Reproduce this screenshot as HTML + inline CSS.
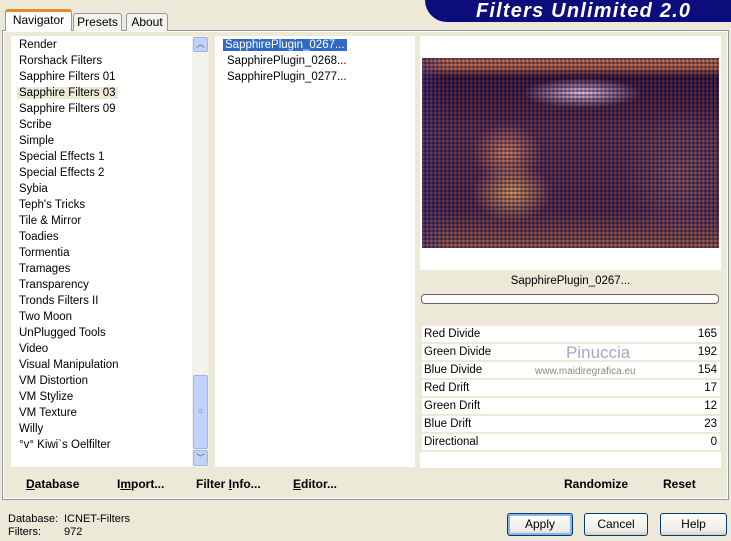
<!DOCTYPE html>
<html><head><style>
*{margin:0;padding:0;box-sizing:border-box}
body{width:731px;height:541px;background:#ece9d8;font-family:"Liberation Sans",sans-serif;font-size:11px;color:#000;position:relative;overflow:hidden}
.a{position:absolute}
.tab{position:absolute;border:1px solid #919b9c;border-bottom:none;background:#f4f3ee;font-size:12px;text-align:center;border-radius:3px 3px 0 0}
.list div{height:16px;line-height:16px;padding-left:8px;font-size:11.5px;white-space:nowrap}
.row{position:absolute;left:422px;width:298px;height:16px;background:#fff;font-size:11.5px;line-height:16px}
.row span{position:absolute;right:3px}
.row b{font-weight:normal;position:absolute;left:2px}
.btn{position:absolute;top:513px;height:23px;border:1px solid #003c74;border-radius:3px;background:linear-gradient(#fff,#ecebe6 80%,#d6d0c5);font-size:12px;text-align:center;line-height:21px}
.bb{position:absolute;top:477px;font-weight:bold;font-size:12px}
</style></head><body>
<div class="a" style="left:425px;top:0;width:320px;height:22px;background:#0c0c7c;border-radius:0 0 0 26px"></div>
<div class="a" style="left:476px;top:0px;color:#fff;font-weight:bold;font-style:italic;font-size:20px;letter-spacing:1.2px">Filters Unlimited 2.0</div>
<div class="a" style="left:2px;top:30px;width:727px;height:470px;border:1px solid #919b9c;background:#fcfcfe"></div>
<div class="tab" style="left:5px;top:9px;width:67px;height:22px;background:#fcfcfe;border-top:3px solid #e68b2c;line-height:17px">Navigator</div>
<div class="tab" style="left:73px;top:13px;width:49px;height:18px;line-height:17px">Presets</div>
<div class="tab" style="left:126px;top:13px;width:42px;height:18px;line-height:17px">About</div>
<div class="a" style="left:4px;top:32px;width:723px;height:466px;background:#ece9d8"></div>
<div class="a list" style="left:11px;top:36px;width:182px;height:431px;background:#fff;padding-top:1px">
<div>Render</div><div>Rorshack Filters</div><div>Sapphire Filters 01</div><div><span style="background:#ece9d8;padding:0 2px;margin-left:-2px">Sapphire Filters 03</span></div><div>Sapphire Filters 09</div><div>Scribe</div><div>Simple</div><div>Special Effects 1</div><div>Special Effects 2</div><div>Sybia</div><div>Teph's Tricks</div><div>Tile &amp; Mirror</div><div>Toadies</div><div>Tormentia</div><div>Tramages</div><div>Transparency</div><div>Tronds Filters II</div><div>Two Moon</div><div>UnPlugged Tools</div><div>Video</div><div>Visual Manipulation</div><div>VM Distortion</div><div>VM Stylize</div><div>VM Texture</div><div>Willy</div><div>°v° Kiwi`s Oelfilter</div>
</div>
<div class="a" style="left:192px;top:36px;width:16px;height:431px;background:#f3f1ec"></div>
<div class="a" style="left:193px;top:37px;width:15px;height:15px;background:#c1d3fb;border:1px solid #9db4e8;border-radius:2px;color:#4d6185;font-size:9px;text-align:center;line-height:13px">︿</div>
<div class="a" style="left:193px;top:375px;width:15px;height:74px;background:#c1d3fb;border:1px solid #9db4e8;border-radius:2px;color:#8ea6d8;text-align:center;line-height:70px;font-size:9px">≡</div>
<div class="a" style="left:193px;top:450px;width:15px;height:16px;background:#c1d3fb;border:1px solid #9db4e8;border-radius:2px;color:#4d6185;font-size:9px;text-align:center;line-height:14px">﹀</div>
<div class="a list" style="left:215px;top:36px;width:200px;height:431px;background:#fff;padding-top:1px">
<div style="padding-left:10px"><span style="background:#316ac5;color:#fff;padding:0 2px;margin-left:-2px">SapphirePlugin_0267...</span></div><div style="padding-left:12px">SapphirePlugin_0268...</div><div style="padding-left:12px">SapphirePlugin_0277...</div>
</div>
<div class="a" style="left:420px;top:36px;width:301px;height:234px;background:#fff"></div>
<div class="a" style="left:422px;top:58px;width:297px;height:190px;background:
repeating-linear-gradient(90deg,rgba(255,40,40,.25) 0 1px,rgba(40,200,40,.2) 1px 2px,rgba(40,40,255,.25) 2px 3px,rgba(0,0,0,.3) 3px 4px),
repeating-linear-gradient(0deg,rgba(0,0,0,.4) 0 2px,transparent 2px 4px),
linear-gradient(180deg,transparent 0,transparent 190px),
radial-gradient(ellipse 40px 30px at 90px 135px,#d8b050,transparent),
radial-gradient(ellipse 35px 30px at 85px 95px,#c89050,transparent),
radial-gradient(ellipse 60px 15px at 160px 35px,#e8e8f0,transparent),
radial-gradient(ellipse 60px 70px at 260px 120px,#6a5a50,transparent),
linear-gradient(90deg,rgba(40,60,120,.6) 0,transparent 25px),
linear-gradient(#b07a3a 0,#b07a3a 5%,#201828 10%,#4a3a40 40%,#3a3038 80%,#8a6a38 100%)"></div>
<div class="a" style="left:420px;top:270px;width:301px;height:50px;background:#ece9d8"></div>
<div class="a" style="left:420px;top:275px;width:301px;text-align:center;font-size:11.5px">SapphirePlugin_0267...</div>
<div class="a" style="left:421px;top:294px;width:298px;height:10px;border:1px solid #666;border-radius:4px;background:#fff"></div>
<div class="row" style="top:326px"><b>Red Divide</b><span>165</span></div>
<div class="row" style="top:344px"><b>Green Divide</b><span>192</span></div>
<div class="row" style="top:362px"><b>Blue Divide</b><span>154</span></div>
<div class="row" style="top:380px"><b>Red Drift</b><span>17</span></div>
<div class="row" style="top:398px"><b>Green Drift</b><span>12</span></div>
<div class="row" style="top:416px"><b>Blue Drift</b><span>23</span></div>
<div class="row" style="top:434px"><b>Directional</b><span>0</span></div>
<div class="a" style="left:420px;top:452px;width:301px;height:16px;background:#fff"></div>
<div class="a" style="left:566px;top:343px;color:#a8a8c0;font-size:17px">Pinuccia</div>
<div class="a" style="left:535px;top:366px;color:#888;font-size:10px">www.maidiregrafica.eu</div>
<div class="bb" style="left:26px"><u>D</u>atabase</div>
<div class="bb" style="left:117px">I<u>m</u>port...</div>
<div class="bb" style="left:196px">Filter <u>I</u>nfo...</div>
<div class="bb" style="left:293px"><u>E</u>ditor...</div>
<div class="bb" style="left:564px">Randomize</div>
<div class="bb" style="left:663px">Reset</div>
<div class="a" style="left:8px;top:513px;font-size:11px;line-height:13px">Database:<br>Filters:</div>
<div class="a" style="left:64px;top:513px;font-size:11px;line-height:13px">ICNET-Filters<br>972</div>
<div class="btn" style="left:507px;width:66px;box-shadow:inset 0 0 0 2px #8cb0f0">Apply</div>
<div class="btn" style="left:584px;width:64px">Cancel</div>
<div class="btn" style="left:660px;width:67px">Help</div>
</body></html>
